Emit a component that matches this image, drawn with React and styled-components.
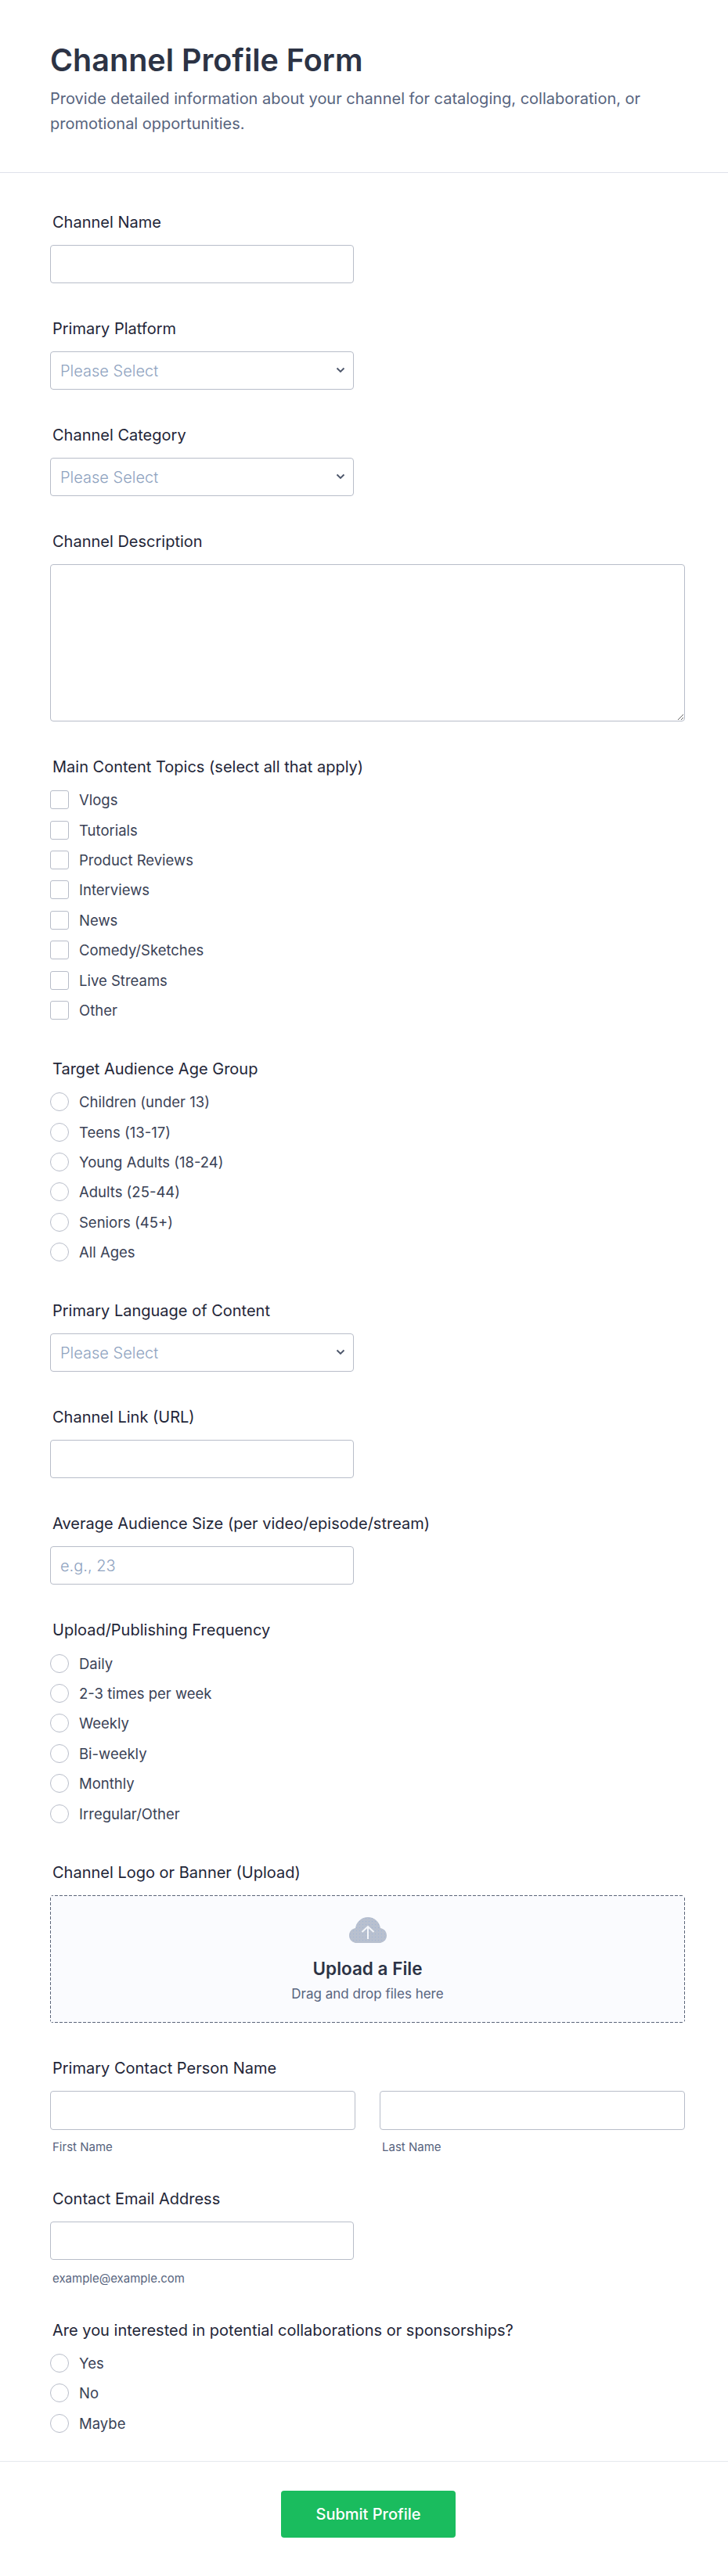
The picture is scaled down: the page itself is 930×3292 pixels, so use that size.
import styled, { createGlobalStyle } from "styled-components";

const GlobalStyle = createGlobalStyle`
	* { box-sizing: border-box; }
	body {
		margin: 0;
		background: #fff;
		font-family: Inter, "Liberation Sans", sans-serif;
		color: #2c3345;
	}
`;

const topics = ["Vlogs", "Tutorials", "Product Reviews", "Interviews", "News", "Comedy/Sketches", "Live Streams", "Other"];
const ages = ["Children (under 13)", "Teens (13-17)", "Young Adults (18-24)", "Adults (25-44)", "Seniors (45+)", "All Ages"];
const frequency = ["Daily", "2-3 times per week", "Weekly", "Bi-weekly", "Monthly", "Irregular/Other"];
const collab = ["Yes", "No", "Maybe"];

const Chevron = () => (
	<ChevronIcon width="12" height="8" viewBox="0 0 12 8" fill="none">
		<path d="M1.500 1.500 6 6l4.500-4.500" stroke="#4a5468" strokeWidth="1.800" />
	</ChevronIcon>
);

const SelectField = ({ label }) => (
	<Field>
		<Label>{label}</Label>
		<SelectWrap>
			<Select defaultValue="">
				<option value="" disabled>
					Please Select
				</option>
			</Select>
			<Chevron />
		</SelectWrap>
	</Field>
);

const OptionList = ({ label, type, items, name }) => (
	<ListField>
		<Label>{label}</Label>
		<List>
			{items.map((item) => (
				<Option key={item}>
					{type === "radio" ? <Radio type="radio" name={name} /> : <Checkbox type="checkbox" />}
					<span>{item}</span>
				</Option>
			))}
		</List>
	</ListField>
);

const CloudIcon = () => (
	<svg width="48" height="33" viewBox="0 0 48 33">
		<defs>
			<pattern id="dots" width="4" height="4" patternUnits="userSpaceOnUse">
				<rect width="4" height="4" fill="#b8c0cf" />
				<rect x="1" y="1" width="1" height="1" fill="#9fb4d6" />
			</pattern>
		</defs>
		<path
			d="M10 33C4.400 33 0 28.800 0 23.400 0 18.600 3.400 14.700 8 13.900 9.300 5.900 16 0 24 0c8 0 14.700 5.900 16 13.900 4.600.8 8 4.700 8 9.500C48 28.800 43.600 33 38 33Z"
			fill="url(#dots)"
		/>
		<path d="M24 28V12M16.500 19 24 12l7.500 7" fill="none" stroke="#f4f6fa" strokeWidth="2" />
	</svg>
);

const App = () => {
	return (
		<Page>
			<GlobalStyle />
			<Header>
				<Title>Channel Profile Form</Title>
				<Subtitle>
					Provide detailed information about your channel for cataloging, collaboration, or promotional
					opportunities.
				</Subtitle>
			</Header>
			<Form>
				<Field>
					<Label>Channel Name</Label>
					<Input />
				</Field>
				<SelectField label="Primary Platform" />
				<SelectField label="Channel Category" />
				<Field>
					<Label>Channel Description</Label>
					<Textarea />
				</Field>
				<OptionList label="Main Content Topics (select all that apply)" type="checkbox" items={topics} />
				<OptionList label="Target Audience Age Group" type="radio" name="age" items={ages} />
				<SelectField label="Primary Language of Content" />
				<Field>
					<Label>Channel Link (URL)</Label>
					<Input />
				</Field>
				<Field>
					<Label>Average Audience Size (per video/episode/stream)</Label>
					<Input placeholder="e.g., 23" />
				</Field>
				<OptionList label="Upload/Publishing Frequency" type="radio" name="freq" items={frequency} />
				<Field>
					<Label>Channel Logo or Banner (Upload)</Label>
					<Dropzone>
						<CloudIcon />
						<UploadTitle>Upload a File</UploadTitle>
						<UploadHint>Drag and drop files here</UploadHint>
					</Dropzone>
				</Field>
				<Field>
					<Label>Primary Contact Person Name</Label>
					<NameRow>
						<div>
							<WideInput />
							<NameLabel>First Name</NameLabel>
						</div>
						<div>
							<WideInput />
							<NameLabel>Last Name</NameLabel>
						</div>
					</NameRow>
				</Field>
				<Field>
					<Label>Contact Email Address</Label>
					<Input />
					<SubLabel>example@example.com</SubLabel>
				</Field>
				<OptionList
					label="Are you interested in potential collaborations or sponsorships?"
					type="radio"
					name="collab"
					items={collab}
				/>
			</Form>
			<Footer>
				<SubmitButton type="button">Submit Profile</SubmitButton>
			</Footer>
		</Page>
	);
};

export default App;

const Page = styled.div`
	width: 930px;
	min-height: 3292px;
	background: #fff;
`;

const Header = styled.header`
	height: 221px;
	padding: 53px 64px 0;
	border-bottom: 1px solid #dfe2ea;
`;

const Title = styled.h1`
	margin: 0 0 9px;
	font-size: 39.5px;
	line-height: 48px;
	font-weight: 600;
	color: #2c3345;
`;

const Subtitle = styled.p`
	margin: 0;
	width: 780px;
	font-size: 20px;
	line-height: 32px;
	color: #57647e;
`;

const Form = styled.div`
	padding: 51px 55px 0 64px;
`;

const Field = styled.div`
	margin-bottom: 46px;
`;

const ListField = styled.div`
	margin-bottom: 44px;
	&:last-child {
		margin-bottom: 29px;
	}
`;

const Label = styled.div`
	margin: 0 0 17px 3px;
	font-size: 20px;
	line-height: 24px;
	font-weight: 400;
	color: #1f2638;
`;

const Input = styled.input`
	display: block;
	width: 388px;
	height: 49px;
	padding: 0 12px;
	border: 1px solid #b8bdc9;
	border-radius: 4px;
	background: #fff;
	font: 300 20px Inter, sans-serif;
	&::placeholder {
		color: #8fa3bf;
	}
`;

const WideInput = styled(Input)`
	width: 390px;
	height: 50px;
`;

const SelectWrap = styled.div`
	position: relative;
	width: 388px;
`;

const Select = styled.select`
	display: block;
	width: 100%;
	height: 49px;
	padding: 0 12px;
	border: 1px solid #b8bdc9;
	border-radius: 4px;
	background: #fff;
	appearance: none;
	font: 300 20px Inter, sans-serif;
	color: #8fa3bf;
`;

const ChevronIcon = styled.svg`
	position: absolute;
	top: 20px;
	right: 11px;
`;

const Textarea = styled.textarea`
	display: block;
	width: 811px;
	height: 201px;
	border: 1px solid #b8bdc9;
	border-radius: 4px;
	background: #fff;
`;

const List = styled.div`
	display: flex;
	flex-direction: column;
	margin-top: -6px;
`;

const Option = styled.label`
	display: flex;
	align-items: center;
	gap: 13px;
	height: 38.4px;
	font-size: 18.5px;
	font-weight: 400;
	color: #3a4256;
`;

const Checkbox = styled.input`
	appearance: none;
	width: 24px;
	height: 24px;
	margin: 0;
	border: 1px solid #b8bdc9;
	border-radius: 3px;
	background: #fff;
`;

const Radio = styled(Checkbox)`
	border-radius: 50%;
`;

const Dropzone = styled.div`
	display: flex;
	flex-direction: column;
	align-items: center;
	width: 811px;
	height: 163px;
	padding-top: 28px;
	border-radius: 4px;
	background:
		repeating-linear-gradient(90deg, #5c667a 0 4px, transparent 4px 6px) top / 100% 1px no-repeat,
		repeating-linear-gradient(90deg, #5c667a 0 4px, transparent 4px 6px) bottom / 100% 1px no-repeat,
		repeating-linear-gradient(0deg, #5c667a 0 4px, transparent 4px 6px) left / 1px 100% no-repeat,
		repeating-linear-gradient(0deg, #5c667a 0 4px, transparent 4px 6px) right / 1px 100% no-repeat,
		#fafbfe;
`;

const UploadTitle = styled.div`
	margin-top: 19px;
	font-size: 22.5px;
	line-height: 28px;
	font-weight: 600;
	color: #2c3345;
`;

const UploadHint = styled.div`
	margin-top: 8px;
	font-size: 17px;
	line-height: 20px;
	color: #57647e;
`;

const NameRow = styled.div`
	display: grid;
	grid-template-columns: 390px 390px;
	column-gap: 31px;
`;

const SubLabel = styled.div`
	margin: 15px 0 0 3px;
	font-size: 15px;
	line-height: 17px;
	color: #57647e;
`;

const NameLabel = styled(SubLabel)`
	margin-top: 13px;
`;

const Footer = styled.footer`
	display: flex;
	justify-content: center;
	height: 147px;
	padding: 37px 0 0 11px;
	border-top: 1px solid #e6e8ee;
`;

const SubmitButton = styled.button`
	width: 223px;
	height: 60px;
	border: none;
	border-radius: 4px;
	background: #1abc5e;
	color: #fff;
	font: 500 20px Inter, sans-serif;
`;
